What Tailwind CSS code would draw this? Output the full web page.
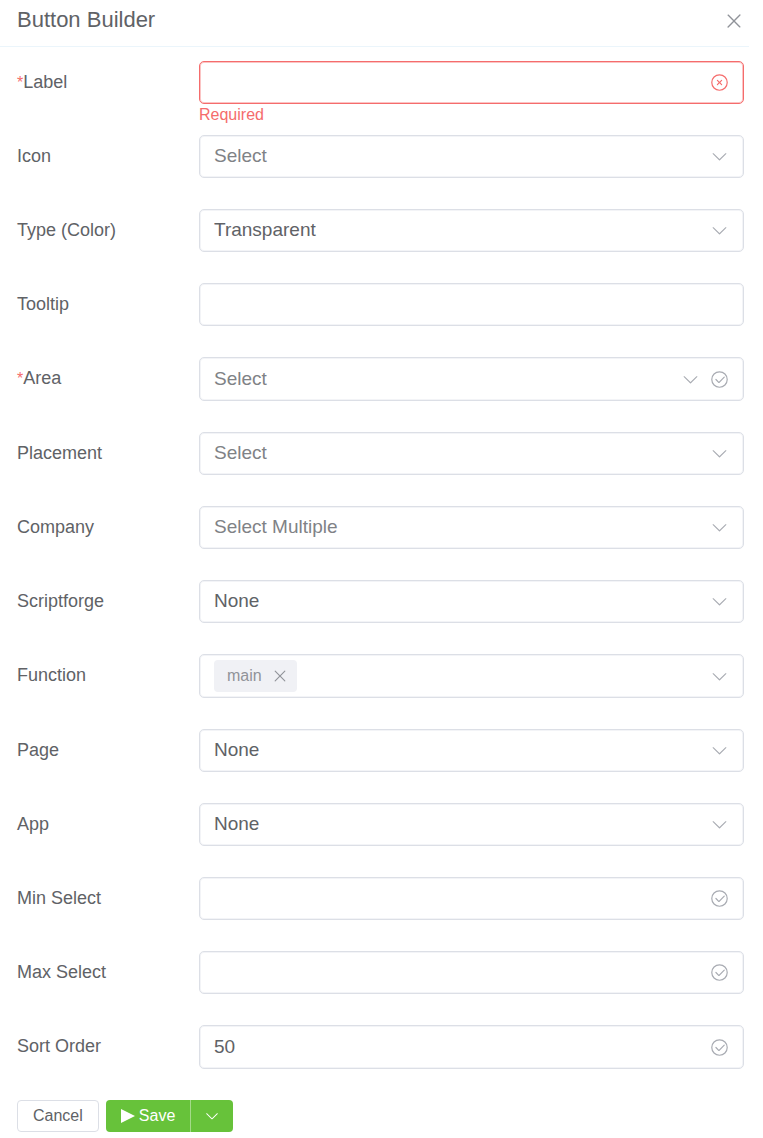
<!DOCTYPE html>
<html lang="en">
<head>
<meta charset="utf-8">
<meta name="viewport" content="width=device-width, initial-scale=1">
<title>Button Builder</title>
<script src="https://cdn.jsdelivr.net/npm/@tailwindcss/browser@4"></script>
</head>
<body class="bg-white font-['Liberation_Sans',Arial,sans-serif] text-[#606266]">
<svg class="hidden" aria-hidden="true">
  <symbol id="arrow" viewBox="0 0 1024 1024"><path fill="currentColor" d="M831.872 340.864 512 652.672 192.128 340.864a30.592 30.592 0 0 0-42.752 0 29.12 29.12 0 0 0 0 41.6L489.664 714.24a32 32 0 0 0 44.672 0l340.288-331.712a29.12 29.12 0 0 0 0-41.728 30.592 30.592 0 0 0-42.752 0z"/></symbol>
  <symbol id="close" viewBox="0 0 1024 1024"><path fill="currentColor" d="M764.288 214.592 512 466.88 259.712 214.592a31.936 31.936 0 0 0-45.12 45.12L466.752 512 214.528 764.224a31.936 31.936 0 1 0 45.12 45.184L512 557.184l252.288 252.288a31.936 31.936 0 0 0 45.12-45.12L557.12 512.064l252.288-252.352a31.936 31.936 0 1 0-45.12-45.184z"/></symbol>
  <symbol id="check" viewBox="0 0 1024 1024"><path fill="currentColor" d="M512 896a384 384 0 1 0 0-768 384 384 0 0 0 0 768m0 64a448 448 0 1 1 0-896 448 448 0 0 1 0 896"/><path fill="currentColor" d="M745.344 361.344a32 32 0 0 1 45.312 45.312l-288 288a32 32 0 0 1-45.312 0l-160-160a32 32 0 1 1 45.312-45.312L480 626.752z"/></symbol>
  <symbol id="error" viewBox="0 0 1024 1024"><path fill="currentColor" d="m466.752 512-90.496-90.496a32 32 0 0 1 45.248-45.248L512 466.752l90.496-90.496a32 32 0 0 1 45.248 45.248L557.248 512l90.496 90.496a32 32 0 1 1-45.248 45.248L512 557.248l-90.496 90.496a32 32 0 0 1-45.248-45.248z"/><path fill="currentColor" d="M512 896a384 384 0 1 0 0-768 384 384 0 0 0 0 768m0 64a448 448 0 1 1 0-896 448 448 0 0 1 0 896"/></symbol>
</svg>

<main>
  <header class="mr-[14px] flex h-[47px] items-start justify-between border-b border-[#ebf5fb] pl-[17px] pr-1 pt-[5px]">
    <h1 class="text-[22px] leading-[30px]">Button Builder</h1>
    <button type="button" aria-label="Close" class="mt-[5px] text-[#909399]"><svg class="block size-[22px]"><use href="#close"/></svg></button>
  </header>

  <form class="pl-[17px] pr-[19px] pt-[14px]">
    <div class="grid grid-cols-[182px_1fr] items-start">
      <label for="label" class="text-lg leading-[42px]"><span class="text-base text-[#f56c6c]">*</span>Label</label>
      <div>
        <div class="relative">
          <input id="label" type="text" required aria-invalid="true" aria-describedby="label-error" class="block h-[43px] w-full rounded-[5px] border border-[#f56c6c] pl-[14px] pr-11 text-[19px] shadow-[inset_0_0_0_1px_#fbc4c4] outline-none">
          <svg class="pointer-events-none absolute inset-y-0 right-[15px] my-auto size-[19px] text-[#f56c6c]"><use href="#error"/></svg>
        </div>
        <p id="label-error" class="h-[31px] text-base leading-[22px] text-[#f56c6c]">Required</p>
      </div>
    </div>

    <div class="grid grid-cols-[182px_1fr] items-start pb-[31px]">
      <label for="icon" class="text-lg leading-[42px]">Icon</label>
      <div class="relative">
        <select id="icon" class="block h-[43px] w-full appearance-none rounded-[5px] border border-[#dcdfe6] pl-[14px] pr-11 text-[19px] text-[#808286] shadow-[inset_0_0_0_1px_#f3f4f7] outline-none"><option>Select</option></select>
        <svg class="pointer-events-none absolute inset-y-0 right-[15px] my-auto size-[19px] text-[#a8abb2]"><use href="#arrow"/></svg>
      </div>
    </div>

    <div class="grid grid-cols-[182px_1fr] items-start pb-[31px]">
      <label for="type" class="text-lg leading-[42px]">Type (Color)</label>
      <div class="relative">
        <select id="type" class="block h-[43px] w-full appearance-none rounded-[5px] border border-[#dcdfe6] pl-[14px] pr-11 text-[19px] text-[#606266] shadow-[inset_0_0_0_1px_#f3f4f7] outline-none"><option>Transparent</option></select>
        <svg class="pointer-events-none absolute inset-y-0 right-[15px] my-auto size-[19px] text-[#a8abb2]"><use href="#arrow"/></svg>
      </div>
    </div>

    <div class="grid grid-cols-[182px_1fr] items-start pb-[31px]">
      <label for="tooltip" class="text-lg leading-[42px]">Tooltip</label>
      <input id="tooltip" type="text" class="block h-[43px] w-full rounded-[5px] border border-[#dcdfe6] px-[14px] text-[19px] shadow-[inset_0_0_0_1px_#f3f4f7] outline-none">
    </div>

    <div class="grid grid-cols-[182px_1fr] items-start pb-[31px]">
      <label for="area" class="text-lg leading-[42px]"><span class="text-base text-[#f56c6c]">*</span>Area</label>
      <div class="relative">
        <select id="area" required class="block h-[44px] w-full appearance-none rounded-[5px] border border-[#dcdfe6] pl-[14px] pr-16 text-[19px] text-[#808286] shadow-[inset_0_0_0_1px_#f3f4f7] outline-none"><option>Select</option></select>
        <div class="pointer-events-none absolute inset-y-0 right-[15px] flex items-center gap-[10px] text-[#a8abb2]">
          <svg class="size-[19px]"><use href="#arrow"/></svg>
          <svg class="size-[19px]"><use href="#check"/></svg>
        </div>
      </div>
    </div>

    <div class="grid grid-cols-[182px_1fr] items-start pb-[31px]">
      <label for="placement" class="text-lg leading-[42px]">Placement</label>
      <div class="relative">
        <select id="placement" class="block h-[43px] w-full appearance-none rounded-[5px] border border-[#dcdfe6] pl-[14px] pr-11 text-[19px] text-[#808286] shadow-[inset_0_0_0_1px_#f3f4f7] outline-none"><option>Select</option></select>
        <svg class="pointer-events-none absolute inset-y-0 right-[15px] my-auto size-[19px] text-[#a8abb2]"><use href="#arrow"/></svg>
      </div>
    </div>

    <div class="grid grid-cols-[182px_1fr] items-start pb-[31px]">
      <label for="company" class="text-lg leading-[42px]">Company</label>
      <div class="relative">
        <select id="company" class="block h-[43px] w-full appearance-none rounded-[5px] border border-[#dcdfe6] pl-[14px] pr-11 text-[19px] text-[#808286] shadow-[inset_0_0_0_1px_#f3f4f7] outline-none"><option>Select Multiple</option></select>
        <svg class="pointer-events-none absolute inset-y-0 right-[15px] my-auto size-[19px] text-[#a8abb2]"><use href="#arrow"/></svg>
      </div>
    </div>

    <div class="grid grid-cols-[182px_1fr] items-start pb-[31px]">
      <label for="scriptforge" class="text-lg leading-[42px]">Scriptforge</label>
      <div class="relative">
        <select id="scriptforge" class="block h-[43px] w-full appearance-none rounded-[5px] border border-[#dcdfe6] pl-[14px] pr-11 text-[19px] text-[#606266] shadow-[inset_0_0_0_1px_#f3f4f7] outline-none"><option>None</option></select>
        <svg class="pointer-events-none absolute inset-y-0 right-[15px] my-auto size-[19px] text-[#a8abb2]"><use href="#arrow"/></svg>
      </div>
    </div>

    <div class="grid grid-cols-[182px_1fr] items-start pb-[31px]">
      <label for="function" class="text-lg leading-[42px]">Function</label>
      <div class="flex h-[44px] items-center gap-2 rounded-[5px] border border-[#dcdfe6] px-[14px] shadow-[inset_0_0_0_1px_#f3f4f7]">
        <span class="flex h-8 items-center gap-[9px] rounded bg-[#f0f1f5] pl-[13px] pr-2 text-base leading-5 text-[#909399]">main
          <button type="button" aria-label="Remove main"><svg class="block size-[18px]"><use href="#close"/></svg></button>
        </span>
        <input id="function" type="text" role="combobox" aria-expanded="false" class="min-w-0 flex-1 text-[19px] outline-none">
        <svg class="size-[19px] text-[#a8abb2]"><use href="#arrow"/></svg>
      </div>
    </div>

    <div class="grid grid-cols-[182px_1fr] items-start pb-[31px]">
      <label for="page" class="text-lg leading-[42px]">Page</label>
      <div class="relative">
        <select id="page" class="block h-[43px] w-full appearance-none rounded-[5px] border border-[#dcdfe6] pl-[14px] pr-11 text-[19px] text-[#606266] shadow-[inset_0_0_0_1px_#f3f4f7] outline-none"><option>None</option></select>
        <svg class="pointer-events-none absolute inset-y-0 right-[15px] my-auto size-[19px] text-[#a8abb2]"><use href="#arrow"/></svg>
      </div>
    </div>

    <div class="grid grid-cols-[182px_1fr] items-start pb-[31px]">
      <label for="app" class="text-lg leading-[42px]">App</label>
      <div class="relative">
        <select id="app" class="block h-[43px] w-full appearance-none rounded-[5px] border border-[#dcdfe6] pl-[14px] pr-11 text-[19px] text-[#606266] shadow-[inset_0_0_0_1px_#f3f4f7] outline-none"><option>None</option></select>
        <svg class="pointer-events-none absolute inset-y-0 right-[15px] my-auto size-[19px] text-[#a8abb2]"><use href="#arrow"/></svg>
      </div>
    </div>

    <div class="grid grid-cols-[182px_1fr] items-start pb-[31px]">
      <label for="min" class="text-lg leading-[42px]">Min Select</label>
      <div class="relative">
        <input id="min" type="text" inputmode="numeric" class="block h-[43px] w-full rounded-[5px] border border-[#dcdfe6] pl-[14px] pr-11 text-[19px] shadow-[inset_0_0_0_1px_#f3f4f7] outline-none">
        <svg class="pointer-events-none absolute inset-y-0 right-[15px] my-auto size-[19px] text-[#a8abb2]"><use href="#check"/></svg>
      </div>
    </div>

    <div class="grid grid-cols-[182px_1fr] items-start pb-[31px]">
      <label for="max" class="text-lg leading-[42px]">Max Select</label>
      <div class="relative">
        <input id="max" type="text" inputmode="numeric" class="block h-[43px] w-full rounded-[5px] border border-[#dcdfe6] pl-[14px] pr-11 text-[19px] shadow-[inset_0_0_0_1px_#f3f4f7] outline-none">
        <svg class="pointer-events-none absolute inset-y-0 right-[15px] my-auto size-[19px] text-[#a8abb2]"><use href="#check"/></svg>
      </div>
    </div>

    <div class="grid grid-cols-[182px_1fr] items-start pb-[31px]">
      <label for="sort" class="text-lg leading-[42px]">Sort Order</label>
      <div class="relative">
        <input id="sort" type="text" inputmode="numeric" value="50" class="block h-[44px] w-full rounded-[5px] border border-[#dcdfe6] pl-[14px] pr-11 text-[19px] shadow-[inset_0_0_0_1px_#f3f4f7] outline-none">
        <svg class="pointer-events-none absolute inset-y-0 right-[15px] my-auto size-[19px] text-[#a8abb2]"><use href="#check"/></svg>
      </div>
    </div>

    <div class="flex gap-[7px]">
      <button type="button" class="h-8 rounded border border-[#dcdfe6] px-[15px] text-base leading-5">Cancel</button>
      <div class="flex h-8 overflow-hidden rounded bg-[#67c23a] text-white">
        <button type="submit" class="flex items-center gap-1 px-[15px] text-base leading-5">
          <svg class="size-[14px]" viewBox="0 0 14 14" aria-hidden="true"><path fill="currentColor" d="M0 0 14 7 0 14z"/></svg>Save
        </button>
        <button type="button" aria-label="More save options" class="flex w-[43px] items-center justify-center border-l border-[#a4da89]"><svg class="size-4"><use href="#arrow"/></svg></button>
      </div>
    </div>
  </form>
</main>
</body>
</html>
